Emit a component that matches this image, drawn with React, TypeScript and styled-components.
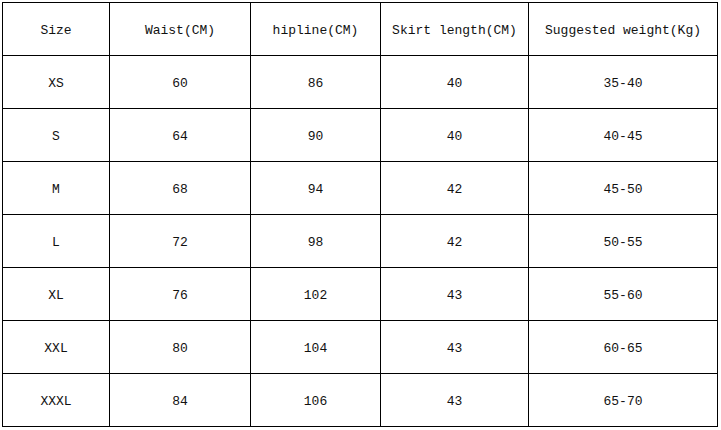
import styled, { createGlobalStyle } from 'styled-components'

const GlobalStyle = createGlobalStyle`
  html, body {
    margin: 0;
    padding: 0;
    background: #ffffff;
  }
`

const Page = styled.div`
  width: 721px;
  height: 430px;
  padding: 2px 0 0 2px;
  box-sizing: border-box;
  background: #ffffff;
`

const Table = styled.table`
  border-collapse: collapse;
  table-layout: fixed;
  font-family: "Liberation Mono", "DejaVu Sans Mono", monospace;
  font-size: 13px;
  color: #111111;
`

const Cell = styled.td<{ $width?: number }>`
  border: 1px solid #000000;
  height: 53px;
  padding: 2px 0 0 0;
  text-align: center;
  vertical-align: middle;
  box-sizing: border-box;
  ${p => (p.$width ? `width: ${p.$width}px;` : '')}
`

const columns = [
  { title: 'Size', width: 107 },
  { title: 'Waist(CM)', width: 141 },
  { title: 'hipline(CM)', width: 130 },
  { title: 'Skirt length(CM)', width: 148 },
  { title: 'Suggested weight(Kg)', width: 189 }
]

const rows = [
  ['XS', '60', '86', '40', '35-40'],
  ['S', '64', '90', '40', '40-45'],
  ['M', '68', '94', '42', '45-50'],
  ['L', '72', '98', '42', '50-55'],
  ['XL', '76', '102', '43', '55-60'],
  ['XXL', '80', '104', '43', '60-65'],
  ['XXXL', '84', '106', '43', '65-70']
]

function SizeChart () {
  return (
    <Page>
      <GlobalStyle />
      <Table>
        <tbody>
          <tr>
            {columns.map(c => (
              <Cell key={c.title} $width={c.width}>{c.title}</Cell>
            ))}
          </tr>
          {rows.map(r => (
            <tr key={r[0]}>
              {r.map((v, i) => (
                <Cell key={i}>{v}</Cell>
              ))}
            </tr>
          ))}
        </tbody>
      </Table>
    </Page>
  )
}

export default SizeChart
